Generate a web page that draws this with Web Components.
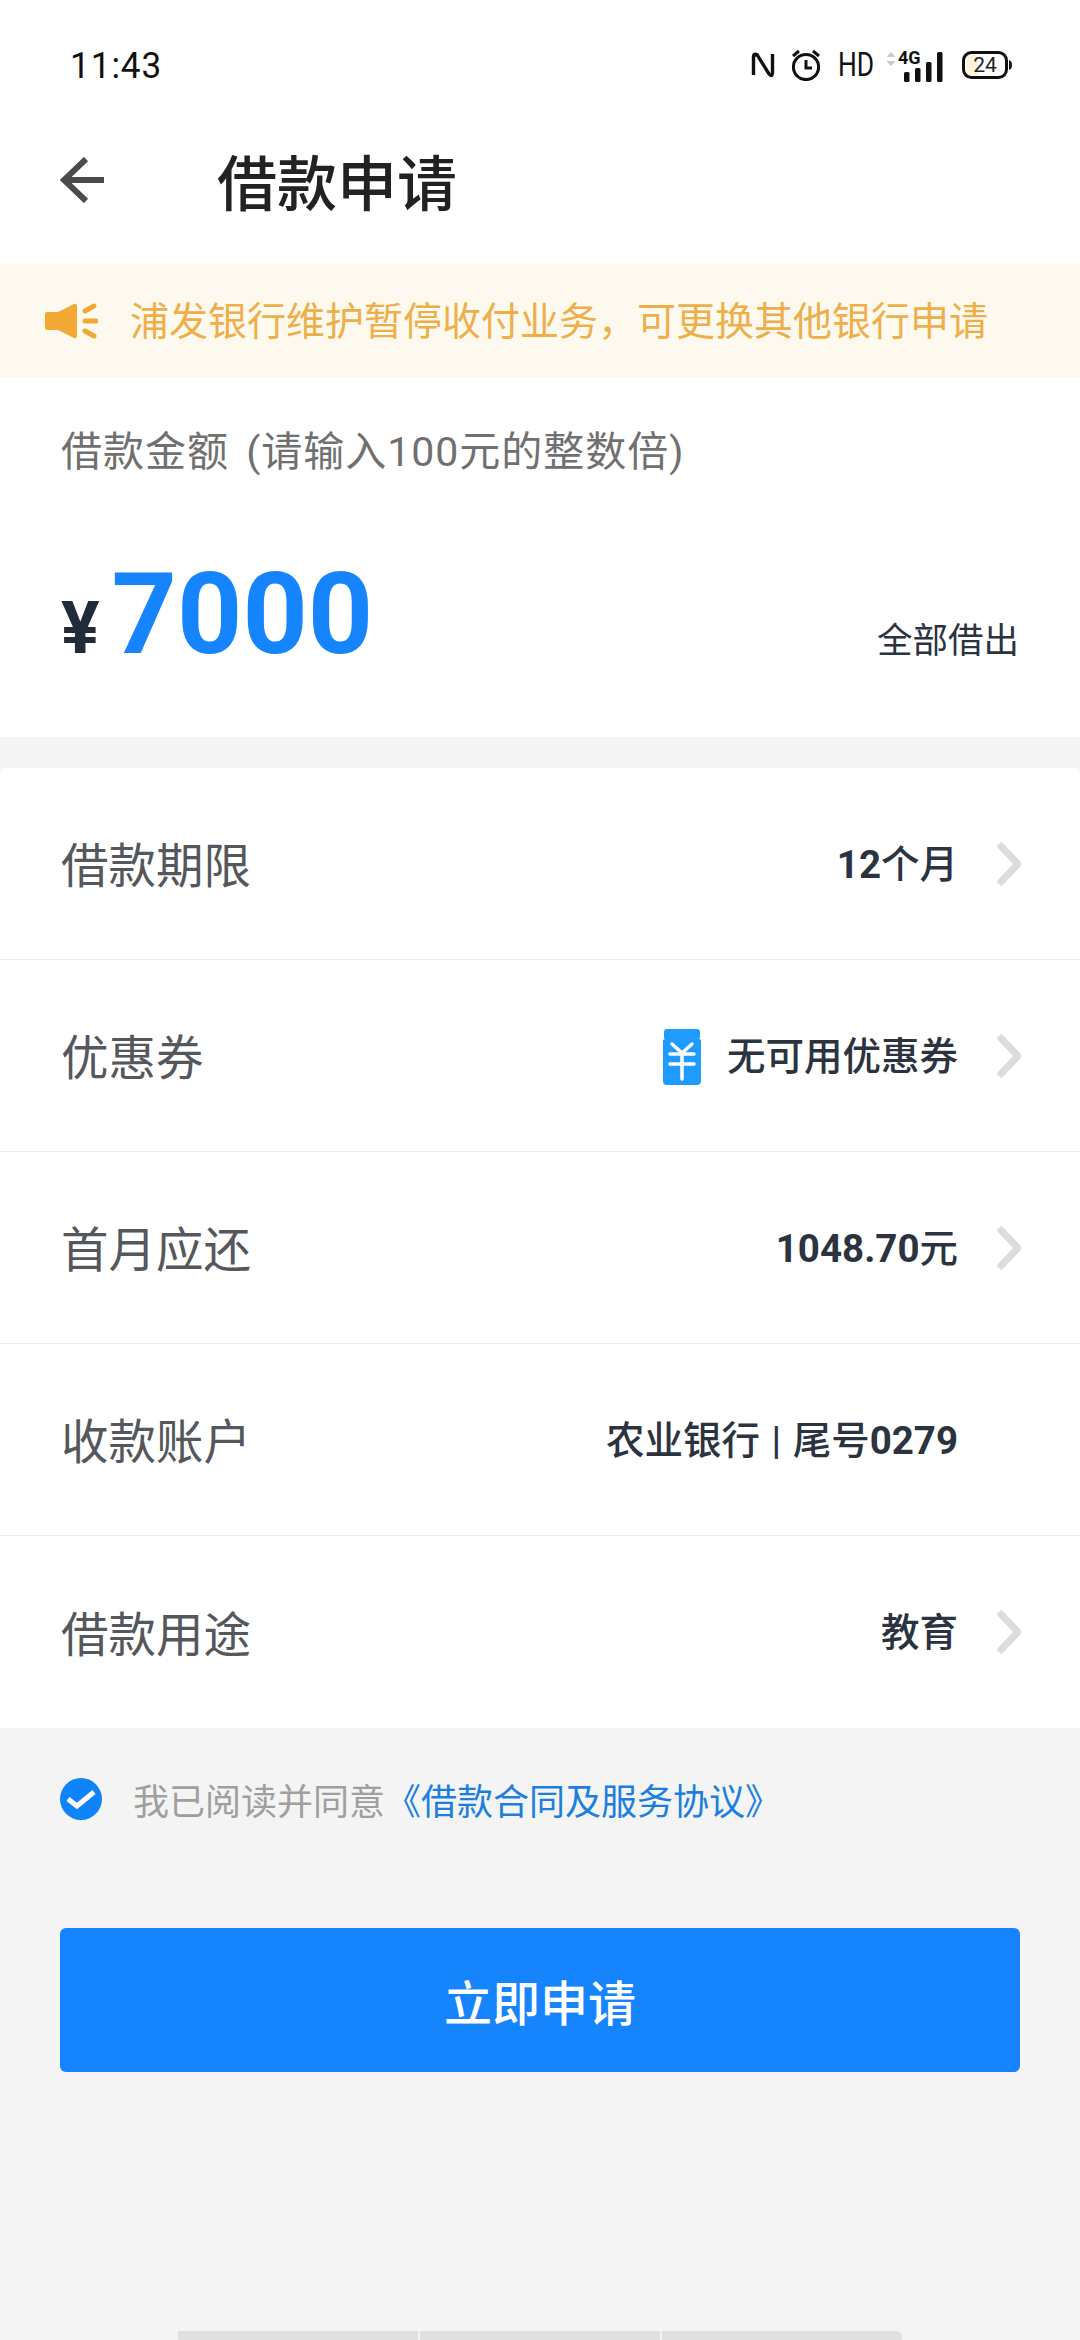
<!DOCTYPE html>
<html lang="zh-CN">
<head>
<meta charset="utf-8">
<title>借款申请</title>
<style>
  html, body {
    margin: 0;
    background: #f4f4f4;
    font-family: Roboto, "Noto Sans CJK SC", sans-serif;
  }
  body {
    display: flex;
    flex-direction: column;
    width: 1080px;
    height: 2340px;
    overflow: hidden;
  }
  .rows {
    display: block;
    margin-top: 31px;
    border-radius: 6px 6px 0 0;
    overflow: hidden;
  }
</style>
</head>
<body>
  <status-bar time="11:43"></status-bar>
  <app-nav>借款申请</app-nav>
  <notice-banner>浦发银行维护暂停收付业务&#xFF0C;可更换其他银行申请</notice-banner>
  <amount-card amount="7000"></amount-card>

  <div class="rows">
    <form-row label="借款期限" arrow><b>12</b>个月</form-row>
    <form-row label="优惠券" arrow>
      <svg slot="icon" width="38" height="56" viewBox="0 0 38 56">
        <path fill="#1f9bff" d="M4 0h30a3 3 0 0 1 3 3v5a2 2 0 0 1-1 2a2 2 0 0 1 2 2v40a4 4 0 0 1-4 4H4a4 4 0 0 1-4-4V12a2 2 0 0 1 2-2a2 2 0 0 1-1-2V3a3 3 0 0 1 3-3z"/>
        <path fill="none" stroke="#fff" stroke-width="3.500" stroke-linecap="round" stroke-linejoin="round" d="M9 15l10 9l10-9M7 25h24M7 35h24M19 25v25"/>
      </svg>
      无可用优惠券
    </form-row>
    <form-row label="首月应还" arrow><b>1048.70</b>元</form-row>
    <form-row label="收款账户">农业银行 | 尾号<b>0279</b></form-row>
    <form-row label="借款用途" arrow last>教育</form-row>
  </div>

  <agree-line link="《借款合同及服务协议》">我已阅读并同意</agree-line>
  <primary-button>立即申请</primary-button>
  <gesture-bar></gesture-bar>

<script>
/** Top system bar with the clock and the indicator icons. */
class StatusBar extends HTMLElement {
  constructor() {
    super();
    const root = this.attachShadow({mode: 'open'});
    root.innerHTML = `
      <style>
        :host {
          display: flex;
          align-items: center;
          box-sizing: border-box;
          height: 130px;
          padding: 0 68px 0 70px;
          background: #fff;
          color: #111;
          font-family: Roboto, sans-serif;
        }
        .time {
          flex: 1;
          font-size: 37px;
          letter-spacing: 1px;
          transform: scaleX(.95);
          transform-origin: left center;
        }
        .icons {
          display: flex;
          align-items: center;
        }
        svg { display: block; }
        .hd {
          width: 36px;
          margin: 0 12px 0 16px;
          font-size: 33px;
          line-height: 34px;
          transform: scaleX(.8);
          transform-origin: left center;
          white-space: nowrap;
        }
      </style>
      <div class="time"></div>
      <div class="icons">
        <svg width="24" height="30" viewBox="0 0 24 30" fill="none" stroke="#111" stroke-width="3.400">
          <path d="M2.500 25V7q0-4 3.500-2.500L18 24q3 3.500 3.500-1V4"/>
          <path d="M6 4.500L2.500 7M18 24l3.500 2" stroke-width="2"/>
        </svg>
        <svg style="margin-left:15px" width="32" height="32" viewBox="0 0 32 32" fill="none" stroke="#111">
          <circle cx="16" cy="18" r="12.600" stroke-width="3"/>
          <path d="M16 11v8h6" stroke-width="3"/>
          <path d="M3 7l6-5M29 7l-6-5" stroke-width="3"/>
        </svg>
        <div class="hd">HD</div>
        <svg width="58" height="36" viewBox="0 -4 58 36">
          <path fill="#c9c9c9" d="M5 1l4.500 5h-9zM5 15l4.500-5h-9z"/>
          <text x="12" y="13" font-family="Roboto, sans-serif" font-weight="700" font-size="18" fill="#111">4G</text>
          <g fill="#111">
            <rect x="18" y="21" width="5.500" height="10" rx="1.500"/>
            <rect x="29" y="17" width="5.500" height="14" rx="1.500"/>
            <rect x="40" y="11" width="5.500" height="20" rx="1.500"/>
            <rect x="51" y="1" width="5.500" height="30" rx="1.500"/>
          </g>
        </svg>
        <svg style="margin-left:18px" width="50" height="28" viewBox="0 0 50 28">
          <path fill="#fdf3d9" d="M5 4h11v20H5z"/>
          <rect x="1.500" y="1.500" width="43" height="25" rx="8" fill="none" stroke="#111" stroke-width="3"/>
          <path fill="#111" d="M47 9q3 1 3 5t-3 5z"/>
          <text x="23" y="21" text-anchor="middle" font-family="Roboto, sans-serif" font-size="21" fill="#222">24</text>
        </svg>
      </div>
    `;
    root.querySelector('.time').textContent = this.getAttribute('time');
  }
}

/** Page title row with the back arrow. */
class AppNav extends HTMLElement {
  constructor() {
    super();
    this.attachShadow({mode: 'open'}).innerHTML = `
      <style>
        :host {
          display: flex;
          align-items: center;
          box-sizing: border-box;
          height: 134px;
          padding: 0 0 34px 60px;
          background: #fff;
        }
        svg { display: block; margin-right: 113px; }
        h1 {
          margin: 0;
          font: 500 60px/1 "Noto Sans CJK SC", sans-serif;
          color: #222;
        }
      </style>
      <svg width="44" height="46" viewBox="0 0 44 46" fill="none" stroke="#4a4a4a" stroke-width="6">
        <path d="M26 2L4 23l22 21M5 23h39"/>
      </svg>
      <h1><slot></slot></h1>
    `;
  }
}

/** Pale yellow notice strip. */
class NoticeBanner extends HTMLElement {
  constructor() {
    super();
    this.attachShadow({mode: 'open'}).innerHTML = `
      <style>
        :host {
          display: flex;
          align-items: center;
          box-sizing: border-box;
          height: 113px;
          padding-left: 45px;
          background: #fef9ef;
          color: #eeaf4a;
          font: 39px/1 "Noto Sans CJK SC", sans-serif;
        }
        svg { display: block; margin-right: 32px; }
        span { margin-top: -4px; }
      </style>
      <svg width="53" height="36" viewBox="0 0 53 36">
        <path fill="#f2a934" d="M2 9h11L29 1q3-1 3 2v30q0 3-3 2L13 27H2q-2 0-2-2V11q0-2 2-2z"/>
        <path fill="none" stroke="#f2a934" stroke-width="5" stroke-linecap="round" d="M40 8l9-5M40 18h11M40 28l9 5"/>
      </svg>
      <span><slot></slot></span>
    `;
  }
}

/** Loan amount block. */
class AmountCard extends HTMLElement {
  constructor() {
    super();
    const root = this.attachShadow({mode: 'open'});
    root.innerHTML = `
      <style>
        :host {
          display: block;
          box-sizing: border-box;
          height: 360px;
          padding: 52px 61px 0;
          background: #fff;
          font-family: Roboto, "Noto Sans CJK SC", sans-serif;
        }
        .hint {
          font-size: 41px;
          line-height: 46px;
          letter-spacing: 1px;
          word-spacing: 6px;
          color: #707070;
        }
        .line {
          display: flex;
          align-items: baseline;
          margin-top: 72px;
        }
        .yen {
          font-size: 72px;
          font-weight: 700;
          color: #222c38;
          margin-right: 12px;
        }
        .num {
          flex: 1;
          font-size: 114px;
          line-height: 134px;
          font-weight: 700;
          color: #1684fc;
        }
        .all {
          font-size: 35.500px;
          color: #2b3340;
        }
      </style>
      <div class="hint">借款金额 (请输入100元的整数倍)</div>
      <div class="line">
        <span class="yen">¥</span>
        <span class="num"></span>
        <span class="all">全部借出</span>
      </div>
    `;
    root.querySelector('.num').textContent = this.getAttribute('amount');
  }
}

/** One label/value line of the form. */
class FormRow extends HTMLElement {
  constructor() {
    super();
    const root = this.attachShadow({mode: 'open'});
    root.innerHTML = `
      <style>
        :host {
          display: flex;
          align-items: center;
          box-sizing: border-box;
          height: 192px;
          padding: 0 59px 0 61px;
          background: #fff;
          border-bottom: 1.500px solid #eeeeee;
          font-family: Roboto, "Noto Sans CJK SC", sans-serif;
        }
        :host([last]) { border-bottom: 0; }
        .label {
          flex: 1;
          margin-top: -2px;
          font-size: 47.500px;
          color: #54585c;
        }
        .value {
          display: flex;
          align-items: center;
          font-size: 38.500px;
          font-weight: 500;
          color: #2b3340;
          white-space: nowrap;
          word-spacing: 2px;
        }
        .text { margin-top: -6px; }
        ::slotted(svg) { margin: 2px 26px 0 0; }
        ::slotted(b) { font-weight: 700; }
        .arrow {
          display: block;
          width: 63px;
          height: 44px;
        }
      </style>
      <span class="label"></span>
      <span class="value"><slot name="icon"></slot><span class="text"><slot></slot></span></span>
      <span class="arrow"></span>
    `;
    root.querySelector('.label').textContent = this.getAttribute('label');
    if (this.hasAttribute('arrow')) {
      root.querySelector('.arrow').innerHTML = `
        <svg width="63" height="44" viewBox="0 0 63 44" fill="none" stroke="#dcdcdc" stroke-width="7">
          <path d="M41 2l19 20L41 42"/>
        </svg>`;
    }
  }
}

/** Agreement checkbox line. */
class AgreeLine extends HTMLElement {
  constructor() {
    super();
    const root = this.attachShadow({mode: 'open'});
    root.innerHTML = `
      <style>
        :host {
          display: flex;
          align-items: center;
          height: 96px;
          margin-top: 23px;
          padding-left: 60px;
          color: #9f9f9f;
          font: 36px/1 "Noto Sans CJK SC", sans-serif;
        }
        svg { display: block; margin-right: 31px; }
        a { color: #1c7fe0; }
      </style>
      <svg width="42" height="42" viewBox="0 0 42 42">
        <circle cx="21" cy="21" r="21" fill="#0f84fa"/>
        <path d="M8 21l9 7L34 14" fill="none" stroke="#fff" stroke-width="5"/>
      </svg>
      <span><slot></slot><a></a></span>
    `;
    root.querySelector('a').textContent = this.getAttribute('link');
  }
}

/** Full width submit button. */
class PrimaryButton extends HTMLElement {
  constructor() {
    super();
    this.attachShadow({mode: 'open'}).innerHTML = `
      <style>
        :host {
          display: flex;
          align-items: center;
          justify-content: center;
          height: 144px;
          margin: 81px 60px 0;
          border-radius: 6px;
          background: #1684fc;
          color: #fff;
          font: 500 48px/1 "Noto Sans CJK SC", sans-serif;
        }
      </style>
      <slot></slot>
    `;
  }
}

/** The three part bar cut off by the bottom edge. */
class GestureBar extends HTMLElement {
  constructor() {
    super();
    this.attachShadow({mode: 'open'}).innerHTML = `
      <style>
        :host {
          display: flex;
          gap: 2px;
          height: 9px;
          margin: auto 178px 0;
        }
        i { flex: 1; background: #e0e0e0; }
        i:first-child { border-radius: 6px 0 0 0; }
        i:last-child { border-radius: 0 6px 0 0; }
      </style>
      <i></i><i></i><i></i>
    `;
  }
}

window.customElements.define('status-bar', StatusBar);
window.customElements.define('app-nav', AppNav);
window.customElements.define('notice-banner', NoticeBanner);
window.customElements.define('amount-card', AmountCard);
window.customElements.define('form-row', FormRow);
window.customElements.define('agree-line', AgreeLine);
window.customElements.define('primary-button', PrimaryButton);
window.customElements.define('gesture-bar', GestureBar);
</script>
</body>
</html>
